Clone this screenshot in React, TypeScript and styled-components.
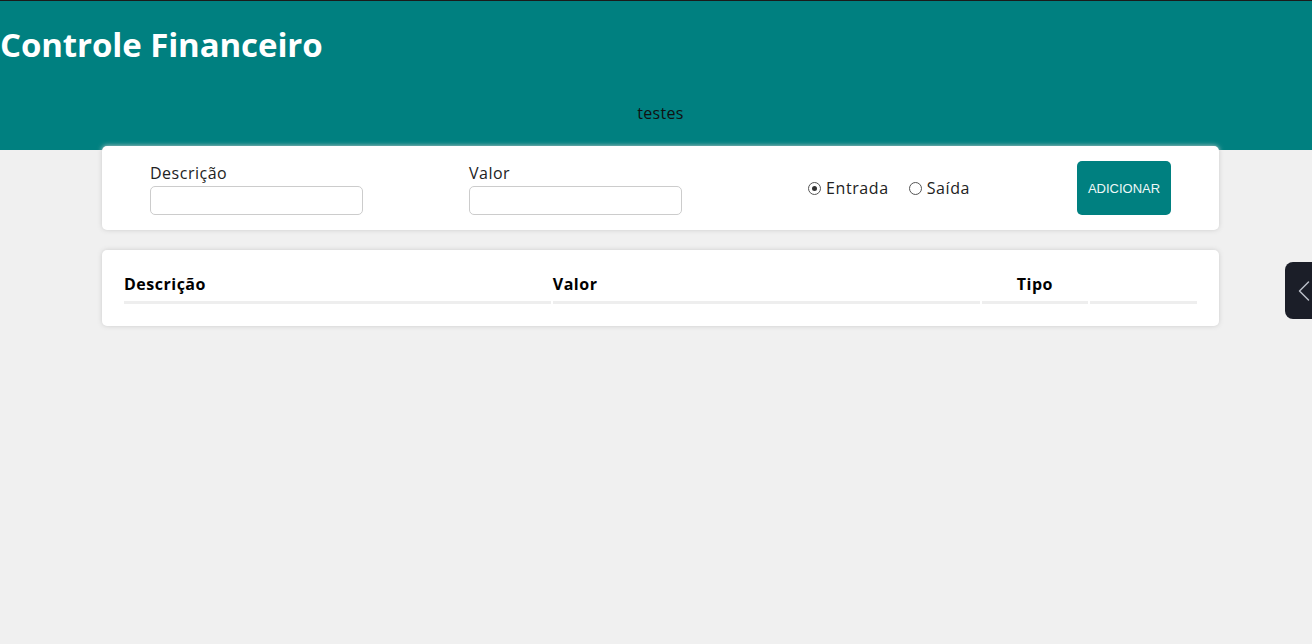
import React from "react";
import styled, { createGlobalStyle } from "styled-components";
import { ChevronLeft } from "lucide-react";

const Global = createGlobalStyle`
  html, body { margin: 0; padding: 0; }
  body {
    background: #f0f0f0;
    font-family: "Open Sans", "Noto Sans", sans-serif;
    min-height: 644px;
  }
  * { box-sizing: border-box; }
`;

const Header = styled.header`
  height: 150px;
  background: #008080;
  border-top: 1px solid #1b1b1b;
  display: flex;
  flex-direction: column;
`;

const Title = styled.h1`
  margin: 23px 0 0 0;
  color: #fff;
  font-size: 33px;
  font-weight: 700;
  line-height: 42px;
  letter-spacing: -0.1px;
`;

const Subtitle = styled.div`
  margin-top: 35px;
  padding: 0 93px 0 102px;
  text-align: center;
  font-size: 16px;
  line-height: 24px;
  letter-spacing: 0.3px;
  color: #111;
`;

const Main = styled.main`
  padding: 0 93px 0 102px;
  margin-top: -4px;
  display: flex;
  flex-direction: column;
  gap: 20px;
`;

const Card = styled.section`
  background: #fff;
  border-radius: 5px;
  box-shadow: 0 0 5px #ccc;
`;

const FormCard = styled(Card)`
  display: flex;
  align-items: flex-end;
  padding: 15px 48px;
`;

const Field = styled.div<{ $gap?: number }>`
  display: flex;
  flex-direction: column;
  margin-left: ${(p) => p.$gap ?? 0}px;
`;

const Label = styled.label`
  font-size: 16px;
  line-height: 24px;
  letter-spacing: 0.5px;
  margin-bottom: 1px;
  color: #222;
`;

const Input = styled.input`
  width: 213px;
  height: 29px;
  border: 1px solid #ccc;
  border-radius: 5px;
  outline: none;
  padding: 0 8px;
`;

const RadioGroup = styled.div<{ $gap?: number }>`
  display: flex;
  align-items: center;
  align-self: center;
  margin-left: ${(p) => p.$gap ?? 0}px;
`;

const RadioLabel = styled.label<{ $gap?: number }>`
  display: flex;
  align-items: center;
  gap: 5px;
  font-size: 16px;
  letter-spacing: 0.6px;
  color: #222;
  margin-left: ${(p) => p.$gap ?? 0}px;
`;

const RadioDot = styled.span<{ $checked?: boolean }>`
  width: 13px;
  height: 13px;
  border-radius: 50%;
  border: 1px solid #555;
  display: inline-flex;
  align-items: center;
  justify-content: center;
  &::after {
    content: "";
    width: 5px;
    height: 5px;
    border-radius: 50%;
    background: ${(p) => (p.$checked ? "#333" : "transparent")};
  }
`;

const Button = styled.button`
  margin-left: auto;
  width: 94px;
  height: 54px;
  border: none;
  border-radius: 5px;
  background: #008080;
  color: #eef8f8;
  font-family: "Liberation Sans", Arial, sans-serif;
  font-size: 13px;
  cursor: pointer;
`;

const TableCard = styled(Card)`
  padding: 20px;
`;

const Table = styled.table`
  width: 100%;
  border-spacing: 2px;
`;

const Th = styled.th<{ $w: number; $align?: string }>`
  width: ${(p) => p.$w}%;
  text-align: ${(p) => p.$align ?? "start"};
  border-bottom: 3px solid #eee;
  padding: 1px 0 6px 0;
  font-size: 16px;
  line-height: 22px;
  letter-spacing: 0.5px;
  font-weight: 700;
  color: #000;
`;

const SideTab = styled.div`
  position: fixed;
  right: 0;
  top: 262px;
  width: 27px;
  height: 57px;
  background: #1b1e28;
  border-radius: 8px 0 0 8px;
  display: flex;
  align-items: center;
  overflow: hidden;
  color: #b9bdc6;
  svg {
    flex: none;
    margin-left: 1px;
  }
`;

export default function App() {
  return (
    <>
      <Global />
      <Header>
        <Title>Controle Financeiro</Title>
        <Subtitle>testes</Subtitle>
      </Header>
      <Main>
        <FormCard>
          <Field>
            <Label>Descrição</Label>
            <Input />
          </Field>
          <Field $gap={106}>
            <Label>Valor</Label>
            <Input />
          </Field>
          <RadioGroup $gap={126}>
            <RadioLabel>
              <RadioDot $checked />
              Entrada
            </RadioLabel>
            <RadioLabel $gap={20}>
              <RadioDot />
              Saída
            </RadioLabel>
          </RadioGroup>
          <Button>ADICIONAR</Button>
        </FormCard>
        <TableCard>
          <Table>
            <thead>
              <tr>
                <Th $w={40}>Descrição</Th>
                <Th $w={40}>Valor</Th>
                <Th $w={10} $align="center">Tipo</Th>
                <Th $w={10}></Th>
              </tr>
            </thead>
          </Table>
        </TableCard>
      </Main>
      <SideTab>
        <ChevronLeft size={36} strokeWidth={1} />
      </SideTab>
    </>
  );
}
